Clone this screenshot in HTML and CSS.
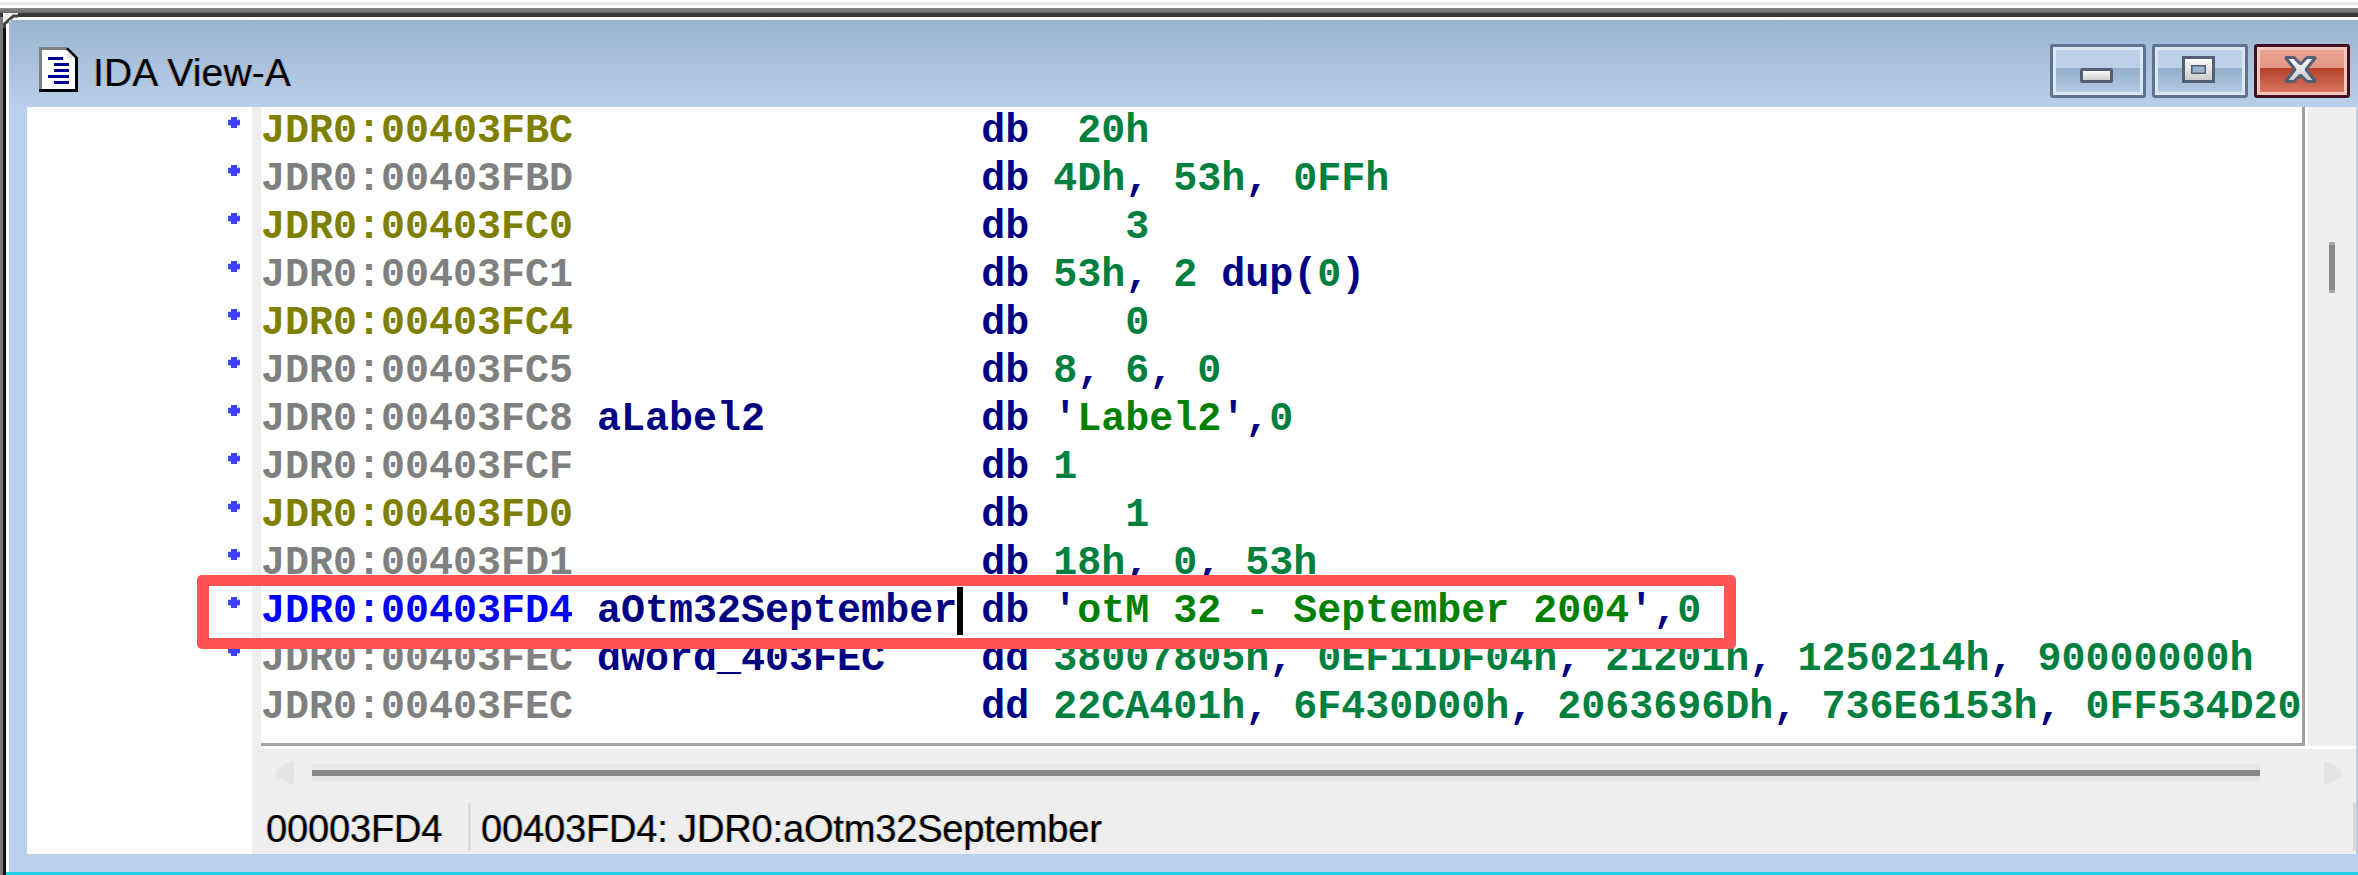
FILE: index.html
```html
<!DOCTYPE html>
<html lang="en">
<head>
<meta charset="utf-8">
<title>IDA View-A</title>
<link rel="stylesheet" href="styles.css">
</head>
<body>
<div class="page">
  <div class="band band-light"></div>
  <div class="band band-gap"></div>
  <div class="band band-gray"></div>
  <div class="band band-dark"></div>
  <div class="frame">
    <div class="edge edge-gray"></div>
    <div class="edge edge-black"></div>
    <svg class="corner" width="15" height="15" viewBox="0 0 15 15">
      <path d="M0 0H15V4H11L4 11V15H0Z" fill="#eee"/>
      <path d="M1.5 15V10L10 2.5" fill="none"/>
      <path d="M1.5 15V11L10.5 3H15" fill="none" stroke="#444" stroke-width="3"/>
      <rect x="6" y="7" width="3" height="3" fill="#bbb"/>
    </svg>
    <div class="shell">
      <div class="window">
        <div class="titlebar">
          <svg class="doc-icon" width="39" height="45" viewBox="0 0 39 45">
            <path d="M1.5 43.5V1.5H28L37.5 11V43.5Z" fill="#fff"/>
            <path d="M1.5 43.5V1.5H28" fill="none" stroke="#808080" stroke-width="3"/>
            <path d="M28 1.5L37.5 11V43.5H0" fill="none" stroke="#000" stroke-width="3"/>
            <path d="M28 3V11H36" fill="#e4e4e4"/>
            <g fill="#000090">
              <rect x="9" y="10" width="15" height="3"/>
              <rect x="15" y="16" width="15" height="3"/>
              <rect x="15" y="22" width="15" height="3"/>
              <rect x="9" y="28" width="21" height="3"/>
              <rect x="15" y="34" width="15" height="3"/>
            </g>
          </svg>
          <span class="title-text">IDA View-A</span>
          <div class="controls">
            <div class="ctl">
              <svg width="33" height="27" viewBox="0 0 33 27">
                <defs><linearGradient id="gl" x1="0" y1="0" x2="0" y2="1"><stop offset="0" stop-color="#fff"/><stop offset="1" stop-color="#c8c8c8"/></linearGradient></defs>
                <rect x="1.5" y="13.5" width="30" height="12" rx="1" fill="url(#gl)" stroke="#555e75" stroke-width="3"/>
              </svg>
            </div>
            <div class="ctl">
              <svg width="33" height="27" viewBox="0 0 33 27">
                <path fill-rule="evenodd" d="M1.5 1.5H31.5V25.5H1.5ZM10.5 10.5V16.5H22.5V10.5Z" fill="url(#gl)" stroke="#555e75" stroke-width="3"/>
                <rect x="10.5" y="10.5" width="12" height="6" fill="#9ab3cf"/>
              </svg>
            </div>
            <div class="ctl ctl-close">
              <svg width="33" height="27" viewBox="0 0 33 27">
                <path d="M1.5 1.5H10L16.5 8L23 1.5H31.5L22 13.5L31.5 25.5H23L16.5 19L10 25.5H1.5L11 13.5Z" fill="url(#gl)" stroke="#555e75" stroke-width="3" stroke-linejoin="bevel"/>
              </svg>
            </div>
          </div>
        </div>
        <div class="client">
          <div class="gutter">
            <div class="dot-row"><i class="dot"></i></div>
            <div class="dot-row"><i class="dot"></i></div>
            <div class="dot-row"><i class="dot"></i></div>
            <div class="dot-row"><i class="dot"></i></div>
            <div class="dot-row"><i class="dot"></i></div>
            <div class="dot-row"><i class="dot"></i></div>
            <div class="dot-row"><i class="dot"></i></div>
            <div class="dot-row"><i class="dot"></i></div>
            <div class="dot-row"><i class="dot"></i></div>
            <div class="dot-row"><i class="dot"></i></div>
            <div class="dot-row"><i class="dot"></i></div>
            <div class="dot-row"><i class="dot"></i></div>
          </div>
          <div class="pane">
            <div class="upper">
              <div class="listing-wrap">
                <div class="listing">
                  <div class="row"><span class="olive">JDR0:00403FBC</span>                 <span class="kw">db</span>  <span class="num">20h</span></div>
                  <div class="row"><span class="gray">JDR0:00403FBD</span>                 <span class="kw">db</span> <span class="num">4Dh</span><span class="kw">,</span> <span class="num">53h</span><span class="kw">,</span> <span class="num">0FFh</span></div>
                  <div class="row"><span class="olive">JDR0:00403FC0</span>                 <span class="kw">db</span>    <span class="num">3</span></div>
                  <div class="row"><span class="gray">JDR0:00403FC1</span>                 <span class="kw">db</span> <span class="num">53h</span><span class="kw">,</span> <span class="num">2</span> <span class="kw">dup(</span><span class="num">0</span><span class="kw">)</span></div>
                  <div class="row"><span class="olive">JDR0:00403FC4</span>                 <span class="kw">db</span>    <span class="num">0</span></div>
                  <div class="row"><span class="gray">JDR0:00403FC5</span>                 <span class="kw">db</span> <span class="num">8</span><span class="kw">,</span> <span class="num">6</span><span class="kw">,</span> <span class="num">0</span></div>
                  <div class="row"><span class="gray">JDR0:00403FC8</span> <span class="kw">aLabel2</span>         <span class="kw">db</span> <span class="kw">'</span><span class="str">Label2</span><span class="kw">',</span><span class="num">0</span></div>
                  <div class="row"><span class="gray">JDR0:00403FCF</span>                 <span class="kw">db</span> <span class="num">1</span></div>
                  <div class="row"><span class="olive">JDR0:00403FD0</span>                 <span class="kw">db</span>    <span class="num">1</span></div>
                  <div class="row"><span class="gray">JDR0:00403FD1</span>                 <span class="kw">db</span> <span class="num">18h</span><span class="kw">,</span> <span class="num">0</span><span class="kw">,</span> <span class="num">53h</span></div>
                  <div class="row"><span class="blue">JDR0:00403FD4</span> <span class="kw">aOtm32September</span><i class="caret"></i> <span class="kw">db</span> <span class="kw">'</span><span class="str">otM 32 - September 2004</span><span class="kw">',</span><span class="num">0</span></div>
                  <div class="row"><span class="gray">JDR0:00403FEC</span> <span class="kw">dword_403FEC</span>    <span class="kw">dd</span> <span class="num">38007805h</span><span class="kw">,</span> <span class="num">0EF11DF04h</span><span class="kw">,</span> <span class="num">21201h</span><span class="kw">,</span> <span class="num">1250214h</span><span class="kw">,</span> <span class="num">90000000h</span></div>
                  <div class="row"><span class="gray">JDR0:00403FEC</span>                 <span class="kw">dd</span> <span class="num">22CA401h</span><span class="kw">,</span> <span class="num">6F430D00h</span><span class="kw">,</span> <span class="num">2063696Dh</span><span class="kw">,</span> <span class="num">736E6153h</span><span class="kw">,</span> <span class="num">0FF534D20</span></div>
                </div>
              </div>
              <div class="vscroll"><div class="vthumb"></div></div>
            </div>
            <div class="hscroll">
              <i class="arrow arrow-left"></i>
              <div class="htrack"><div class="hthumb"></div></div>
              <i class="arrow arrow-right"></i>
            </div>
            <div class="status">
              <span class="status-cell status-offset">00003FD4</span>
              <i class="status-sep"></i>
              <span class="status-cell">00403FD4: JDR0:aOtm32September</span>
              <i class="status-grip"></i>
            </div>
          </div>
          <div class="callout"></div>
        </div>
      </div>
      <div class="taskbar-edge"></div>
    </div>
  </div>
</div>
</body>
</html>
```
FILE: styles.css
```css
* { box-sizing: border-box; }
html, body { margin: 0; padding: 0; background: #fff; }
body { width: 2358px; height: 875px; overflow: hidden; }

.page { display: flex; flex-direction: column; height: 875px; padding-top: 2px; background: #fff; }
.band { flex: none; }
.band-light { height: 3px; background: #e8e8e8; }
.band-gap { height: 3px; background: #fff; }
.band-gray { height: 5px; background: linear-gradient(#8a8a8a, #666); }
.band-dark { height: 4px; background: #363636; }

.frame { position: relative; flex: 1; display: flex; min-height: 0; }
.corner { position: absolute; left: 3px; top: -4px; }
.edge { flex: none; width: 3px; }
.edge-gray { background: #777; }
.edge-black { background: #111; }
.shell { flex: 1; display: flex; flex-direction: column; min-width: 0; }
.taskbar-edge { flex: none; height: 3px; background: #22cde5; }

.window {
  flex: 1; display: flex; flex-direction: column; min-height: 0;
  background: #bad0ea;
  border-top: 3px solid #fff;
  border-left: 3px solid #fff;
}

.titlebar {
  flex: none; height: 87px; display: flex; align-items: flex-start;
  padding: 24px 8px 0 30px;
  background: linear-gradient(#9ab4d1, #b9cfe9);
}
.doc-icon { flex: none; margin-top: 3px; }
.title-text {
  margin: 6px 0 0 15px;
  font: 39px/45px "Liberation Sans", Arial, sans-serif;
  letter-spacing: .15px;
  color: #000;
  text-shadow: -1px 0 rgba(226, 140, 40, .45), 1px 0 rgba(60, 140, 230, .45);
}
.controls { margin-left: auto; display: flex; gap: 6px; }
.ctl {
  width: 96px; height: 54px;
  display: flex; align-items: center; justify-content: center;
  padding: 0 3px 3px 0;
  border: 3px solid #5f7391; border-radius: 3px;
  box-shadow: inset 0 0 0 3px #dde7f3;
  background: linear-gradient(#bcd1e7 0, #bcd1e7 44%, #95aecb 44%, #b5cde6 100%);
}
.ctl-close {
  border-color: #431022;
  box-shadow: inset 0 0 0 3px #f2c6bb;
  background: linear-gradient(#e9a594 0, #e39985 44%, #b5412a 44%, #dc7a66 100%);
}

.client { position: relative; flex: 1; display: flex; min-height: 0; margin: 0 2px 18px 18px; background: #fff; }
.gutter { flex: none; width: 225px; background: #fff; }
.dot-row { height: 48px; padding: 10px 0 0 201px; }
.dot {
  display: block; width: 12px; height: 11px; background: #4040ff;
  clip-path: polygon(25% 0, 75% 0, 75% 25%, 100% 25%, 100% 75%, 75% 75%, 75% 100%, 25% 100%, 25% 75%, 0 75%, 0 25%, 25% 25%);
}

.pane { flex: 1; display: flex; flex-direction: column; min-width: 0; background: #eee; }
.upper { flex: none; display: flex; height: 642px; margin-left: 9px; }
.listing-wrap { flex: 1; min-width: 0; padding: 0 3px 3px 0; background: #fff; }
.listing {
  height: 100%; overflow: hidden;
  background: #fff;
  border-right: 3px solid #a0a0a0; border-bottom: 3px solid #a0a0a0;
  font: bold 40px/48px "Liberation Mono", "Courier New", monospace;
}
.row { position: relative; height: 48px; padding-top: 1px; line-height: 47px; white-space: pre; }
.olive { color: #808000; }
.gray { color: #808080; }
.blue { color: #0000ff; }
.kw { color: #000080; }
.num { color: #008040; }
.str { color: #008000; }
.caret { position: absolute; left: 696px; top: 0; width: 6px; height: 48px; background: #000; }

.vscroll { flex: none; width: 48px; padding: 135px 0 0 21px; background: #eee; border-bottom: 3px solid #fff; }
.vthumb { width: 6px; height: 51px; background: #888; border-top: 3px solid #a8a8a8; border-bottom: 3px solid #a8a8a8; }

.hscroll { flex: none; height: 51px; display: flex; align-items: center; padding: 0 14px 3px 24px; background: #eee; }
.arrow { flex: none; display: block; width: 18px; height: 24px; background: #e4e4e4; }
.arrow-left { clip-path: polygon(100% 0, 100% 100%, 50% 88%, 0 60%, 0 40%, 50% 12%); }
.arrow-right { clip-path: polygon(0 0, 0 100%, 50% 88%, 100% 60%, 100% 40%, 50% 12%); }
.htrack { flex: 1; height: 18px; margin: 0 64px 0 18px; display: flex; align-items: center; background: #e6e6e6; }
.hthumb { flex: 1; height: 6px; background: #888; }

.status { flex: 1; display: flex; align-items: stretch; padding-left: 14px; background: #eee; }
.status-cell {
  padding-top: 4px;
  font: 38px/50px "Liberation Sans", Arial, sans-serif;
  letter-spacing: -.15px;
  color: #000;
  white-space: pre;
  text-shadow: -1px 0 rgba(226, 140, 40, .45), 1px 0 rgba(60, 140, 230, .45);
}
.status-offset { width: 202px; }
.status-sep { flex: none; width: 3px; margin: 3px 10px 4px 0; background: #dcdcdc; }
.status-grip { flex: none; width: 3px; margin: 3px 0 3px auto; background: #d8d8d8; }

.callout {
  position: absolute; left: 170px; top: 468px; width: 1539px; height: 74px;
  border: solid #ff5454; border-width: 11px 12px; border-radius: 5px;
}
```
